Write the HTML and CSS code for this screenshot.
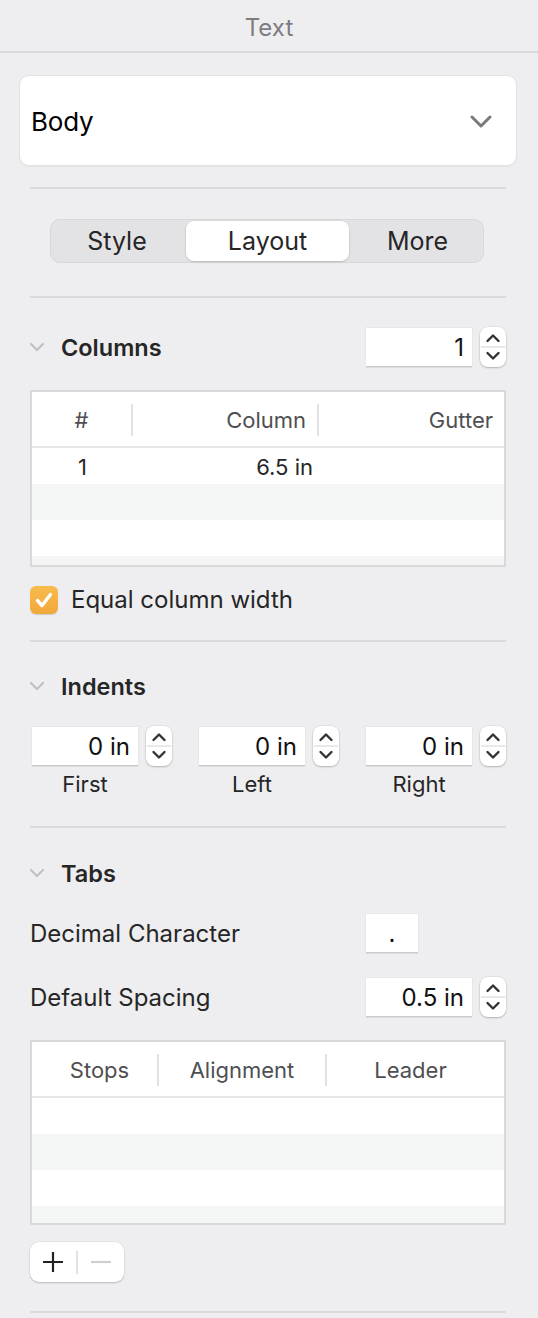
FILE: index.html
```html
<!DOCTYPE html>
<html>
<head>
<meta charset="utf-8">
<link rel="stylesheet" href="styles.css">
</head>
<body>
<div class="panel">
  <header class="title">Text</header>

  <div class="dropdown">
    <span class="dd-label">Body</span>
    <svg class="dd-chev" width="22" height="14" viewBox="0 0 22 14"><path d="M2 2 L11 11 L20 2" fill="none" stroke="#7a7a7a" stroke-width="3" stroke-linecap="round" stroke-linejoin="round"/></svg>
  </div>

  <div class="sep sep-a"></div>

  <div class="seg">
    <div class="seg-item">Style</div>
    <div class="seg-item active">Layout</div>
    <div class="seg-item">More</div>
  </div>

  <div class="sep sep-b"></div>

  <section class="block">
    <div class="sec-head cols-head">
      <svg class="disc" width="16" height="10" viewBox="0 0 16 10"><path d="M2 2 L8 8 L14 2" fill="none" stroke="#c0c0c2" stroke-width="2.2" stroke-linecap="round" stroke-linejoin="round"/></svg>
      <span class="sec-title">Columns</span>
      <div class="num-group">
        <div class="field wide">1</div>
        <div class="stepper">
          <svg width="26" height="40" viewBox="0 0 26 40"><path d="M7.5 14 L13 8.5 L18.5 14" fill="none" stroke="#333" stroke-width="2.4" stroke-linecap="round" stroke-linejoin="round"/><line x1="1" y1="20" x2="25" y2="20" stroke="#e2e2e4" stroke-width="1.5"/><path d="M7.5 26 L13 31.5 L18.5 26" fill="none" stroke="#333" stroke-width="2.4" stroke-linecap="round" stroke-linejoin="round"/></svg>
        </div>
      </div>
    </div>

    <div class="table cols-table">
      <div class="thead">
        <div class="th h1">#</div>
        <div class="th h2">Column</div>
        <div class="th h3">Gutter</div>
      </div>
      <div class="tr white">
        <div class="td d1">1</div>
        <div class="td d2">6.5 in</div>
      </div>
      <div class="tr gray"></div>
      <div class="tr white"></div>
      <div class="tr gray"></div>
    </div>

    <label class="check">
      <span class="box">
        <svg width="28" height="28" viewBox="0 0 28 28"><path d="M7.5 14.5 L12 19.5 L20.5 8.5" fill="none" stroke="#fff" stroke-width="3.4" stroke-linecap="round" stroke-linejoin="round"/></svg>
      </span>
      <span class="check-label">Equal column width</span>
    </label>
  </section>

  <div class="sep sep-c"></div>

  <section class="block">
    <div class="sec-head ind-head">
      <svg class="disc" width="16" height="10" viewBox="0 0 16 10"><path d="M2 2 L8 8 L14 2" fill="none" stroke="#c0c0c2" stroke-width="2.2" stroke-linecap="round" stroke-linejoin="round"/></svg>
      <span class="sec-title">Indents</span>
    </div>
    <div class="indents">
      <div class="ind">
        <div class="num-group">
          <div class="field wide">0 in</div>
          <div class="stepper">
            <svg width="26" height="40" viewBox="0 0 26 40"><path d="M7.5 14 L13 8.5 L18.5 14" fill="none" stroke="#333" stroke-width="2.4" stroke-linecap="round" stroke-linejoin="round"/><line x1="1" y1="20" x2="25" y2="20" stroke="#e2e2e4" stroke-width="1.5"/><path d="M7.5 26 L13 31.5 L18.5 26" fill="none" stroke="#333" stroke-width="2.4" stroke-linecap="round" stroke-linejoin="round"/></svg>
          </div>
        </div>
        <div class="ind-label">First</div>
      </div>
      <div class="ind">
        <div class="num-group">
          <div class="field wide">0 in</div>
          <div class="stepper">
            <svg width="26" height="40" viewBox="0 0 26 40"><path d="M7.5 14 L13 8.5 L18.5 14" fill="none" stroke="#333" stroke-width="2.4" stroke-linecap="round" stroke-linejoin="round"/><line x1="1" y1="20" x2="25" y2="20" stroke="#e2e2e4" stroke-width="1.5"/><path d="M7.5 26 L13 31.5 L18.5 26" fill="none" stroke="#333" stroke-width="2.4" stroke-linecap="round" stroke-linejoin="round"/></svg>
          </div>
        </div>
        <div class="ind-label">Left</div>
      </div>
      <div class="ind">
        <div class="num-group">
          <div class="field wide">0 in</div>
          <div class="stepper">
            <svg width="26" height="40" viewBox="0 0 26 40"><path d="M7.5 14 L13 8.5 L18.5 14" fill="none" stroke="#333" stroke-width="2.4" stroke-linecap="round" stroke-linejoin="round"/><line x1="1" y1="20" x2="25" y2="20" stroke="#e2e2e4" stroke-width="1.5"/><path d="M7.5 26 L13 31.5 L18.5 26" fill="none" stroke="#333" stroke-width="2.4" stroke-linecap="round" stroke-linejoin="round"/></svg>
          </div>
        </div>
        <div class="ind-label">Right</div>
      </div>
    </div>
  </section>

  <div class="sep sep-d"></div>

  <section class="block">
    <div class="sec-head tabs-head">
      <svg class="disc" width="16" height="10" viewBox="0 0 16 10"><path d="M2 2 L8 8 L14 2" fill="none" stroke="#c0c0c2" stroke-width="2.2" stroke-linecap="round" stroke-linejoin="round"/></svg>
      <span class="sec-title">Tabs</span>
    </div>
    <div class="form-row dec-row">
      <span class="row-label">Decimal Character</span>
      <div class="field small">.</div>
    </div>
    <div class="form-row sp-row">
      <span class="row-label">Default Spacing</span>
      <div class="num-group">
        <div class="field wide">0.5 in</div>
        <div class="stepper">
          <svg width="26" height="40" viewBox="0 0 26 40"><path d="M7.5 14 L13 8.5 L18.5 14" fill="none" stroke="#333" stroke-width="2.4" stroke-linecap="round" stroke-linejoin="round"/><line x1="1" y1="20" x2="25" y2="20" stroke="#e2e2e4" stroke-width="1.5"/><path d="M7.5 26 L13 31.5 L18.5 26" fill="none" stroke="#333" stroke-width="2.4" stroke-linecap="round" stroke-linejoin="round"/></svg>
        </div>
      </div>
    </div>

    <div class="table tabs-table">
      <div class="thead">
        <div class="th t1">Stops</div>
        <div class="th t2">Alignment</div>
        <div class="th t3">Leader</div>
      </div>
      <div class="tr white"></div>
      <div class="tr gray"></div>
      <div class="tr white"></div>
      <div class="tr gray"></div>
    </div>

    <div class="pm">
      <span class="pm-btn">
        <svg width="22" height="22" viewBox="0 0 22 22"><path d="M11 1 V21 M1 11 H21" stroke="#222" stroke-width="2.2"/></svg>
      </span>
      <span class="pm-sep"></span>
      <span class="pm-btn">
        <svg width="22" height="22" viewBox="0 0 22 22"><path d="M1 11 H21" stroke="#cfcfcf" stroke-width="2.2"/></svg>
      </span>
    </div>
  </section>

  <div class="sep sep-e"></div>
</div>
</body>
</html>
```

FILE: styles.css
```css
* { box-sizing: border-box; }

html, body {
  margin: 0;
  padding: 0;
  background: #eeeef0;
}

body {
  font-family: Inter, "Liberation Sans", Arial, sans-serif;
  color: #262626;
  width: 538px;
  height: 1318px;
  overflow: hidden;
}

.panel {
  display: flex;
  flex-direction: column;
}

.title {
  height: 53px;
  border-bottom: 2px solid #d8d8da;
  display: flex;
  align-items: center;
  justify-content: center;
  font-size: 24px;
  color: #7d7d7f;
  padding-top: 3px;
}

.dropdown {
  margin: 22px 21px 0 19px;
  height: 91px;
  background: #fff;
  border: 1px solid #e2e2e4;
  border-radius: 10px;
  display: flex;
  align-items: center;
  justify-content: space-between;
  padding: 1px 24px 0 11px;
  box-shadow: 0 1px 1px rgba(0,0,0,0.04);
}

.dd-label {
  font-size: 26px;
  color: #000;
  letter-spacing: -0.2px;
}

.dd-chev { display: block; margin-top: 2px; }

.sep {
  height: 2px;
  background: #dadadc;
  margin-left: 30px;
  margin-right: 32px;
}
.sep-a { margin-top: 21px; }
.sep-b { margin-top: 33px; }
.sep-c { margin-top: 26px; }
.sep-d { margin-top: 28px; }
.sep-e { margin-top: 29px; }

.seg {
  margin: 30px 0 0 50px;
  width: 434px;
  height: 44px;
  background: #e3e3e5;
  border: 1px solid #d8d8da;
  border-radius: 10px;
  display: grid;
  grid-template-columns: 134px 163px 1fr;
  padding: 1px 1px;
}

.seg-item {
  display: flex;
  align-items: center;
  justify-content: center;
  font-size: 25px;
  color: #262626;
  border-radius: 8px;
}
.seg-item:first-child { padding-right: 4px; }
.seg-item:last-child { padding-left: 4px; }

.seg-item.active {
  background: #fff;
  box-shadow: 0 1px 2px rgba(0,0,0,0.15), 0 0 0 0.5px rgba(0,0,0,0.06);
}

.block {
  padding: 0 32px 0 30px;
  display: flex;
  flex-direction: column;
}

.sec-head {
  display: flex;
  align-items: center;
  height: 40px;
}
.cols-head { margin-top: 29px; }
.ind-head { margin-top: 24px; }
.tabs-head { margin-top: 25px; }

.disc { display: block; margin-left: -1px; margin-right: 16px; }

.sec-title {
  font-size: 23.5px;
  font-weight: 600;
  color: #262626;
  flex: 1;
}

.num-group {
  display: flex;
  align-items: center;
  gap: 8px;
}

.field {
  background: #fff;
  height: 38px;
  box-shadow: 0 1.5px 0 #c9c9cb, 0 0 0 0.5px #e0e0e2;
  display: flex;
  align-items: center;
  justify-content: flex-end;
  padding-right: 8px;
  font-size: 24px;
  color: #111;
}
.field.wide { width: 106px; }
.field.small {
  width: 52px;
  justify-content: center;
  padding: 0;
}

.stepper {
  width: 26px;
  height: 40px;
  background: #fff;
  border-radius: 8px;
  box-shadow: 0 1px 2px rgba(0,0,0,0.22), 0 0 0 0.5px rgba(0,0,0,0.08);
}
.stepper svg { display: block; }

.table {
  background: #fff;
  border: 2px solid #d9d9db;
  overflow: hidden;
}

.cols-table { margin-top: 23px; height: 177px; }
.tabs-table { margin-top: 23px; height: 185px; }

.thead {
  display: flex;
  height: 56px;
  border-bottom: 2px solid #e6e6e8;
  align-items: center;
}

.th {
  font-size: 22px;
  color: #4f4f51;
  height: 32px;
  display: flex;
  align-items: center;
  margin-top: 1px;
}

.h1 { width: 101px; border-right: 2px solid #e2e2e4; justify-content: center; }
.h2 { width: 186px; border-right: 2px solid #e2e2e4; justify-content: flex-end; padding-right: 11px; }
.h3 { flex: 1; justify-content: flex-end; padding-right: 11px; }

.t1 { width: 127px; border-right: 2px solid #e2e2e4; justify-content: center; padding-left: 10px; }
.t2 { width: 168px; border-right: 2px solid #e2e2e4; justify-content: center; }
.t3 { flex: 1; justify-content: center; padding-right: 10px; }

.tr {
  height: 36px;
  display: flex;
  align-items: center;
}
.tr.white { background: #fff; }
.tr.gray { background: #f4f5f5; }

.td {
  font-size: 22px;
  color: #262626;
  display: flex;
  align-items: center;
  margin-top: 1px;
}
.d1 { width: 101px; justify-content: center; }
.d2 { width: 186px; justify-content: flex-end; padding-right: 6px; }

.check {
  margin-top: 18px;
  display: flex;
  align-items: center;
  gap: 13px;
}

.box {
  width: 28px;
  height: 28px;
  border-radius: 6px;
  background: linear-gradient(#f7bb4c, #f1a93a);
  box-shadow: 0 0.5px 1px rgba(0,0,0,0.15);
}
.box svg { display: block; }

.check-label {
  font-size: 24px;
  color: #262626;
}

.indents {
  margin-top: 20px;
  display: flex;
  justify-content: space-between;
  margin-left: 2px;
}

.ind {
  display: flex;
  flex-direction: column;
}

.ind-label {
  margin-top: 4px;
  font-size: 22px;
  color: #262626;
  text-align: center;
  width: 106px;
  line-height: 28px;
}

.form-row {
  display: flex;
  align-items: center;
  justify-content: space-between;
}
.dec-row { margin-top: 20px; height: 40px; }
.sp-row { margin-top: 24px; height: 40px; }

.dec-row .field.small { margin-right: 88px; }

.row-label {
  font-size: 24px;
  color: #262626;
}

.pm {
  margin-top: 17px;
  width: 94px;
  height: 40px;
  background: #fff;
  border-radius: 9px;
  box-shadow: 0 1px 2px rgba(0,0,0,0.2), 0 0 0 0.5px rgba(0,0,0,0.06);
  display: flex;
  align-items: center;
}

.pm-btn {
  width: 46px;
  display: flex;
  justify-content: center;
}
.pm-btn svg { display: block; }

.pm-sep {
  width: 1.5px;
  height: 23px;
  background: #e2e2e4;
}
```
